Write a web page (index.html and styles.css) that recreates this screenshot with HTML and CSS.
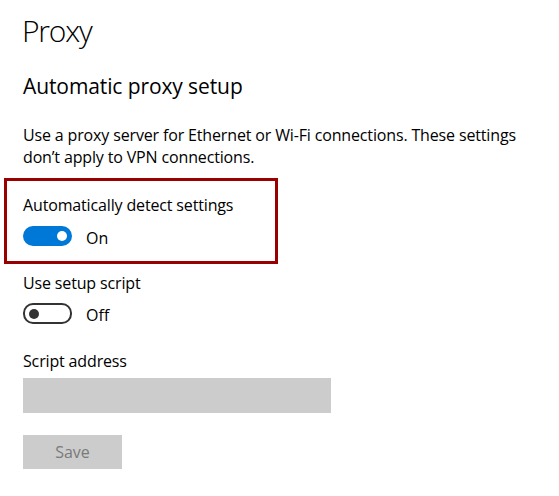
FILE: index.html
```html
<!DOCTYPE html>
<html lang="en">
<head>
<meta charset="utf-8">
<title>Proxy</title>
<link rel="stylesheet" href="styles.css">
</head>
<body>
<main class="page">
  <h1 class="title">Proxy</h1>
  <h2 class="section">Automatic proxy setup</h2>
  <p class="desc">Use a proxy server for Ethernet or Wi-Fi connections. These settings don’t apply to VPN connections.</p>

  <div class="highlight">
    <div class="label">Automatically detect settings</div>
    <div class="toggle-row">
      <span class="toggle on"><span class="knob"></span></span>
      <span class="state">On</span>
    </div>
  </div>

  <div class="setting">
    <div class="label">Use setup script</div>
    <div class="toggle-row off-row">
      <span class="toggle off"><span class="knob"></span></span>
      <span class="state">Off</span>
    </div>
  </div>

  <div class="field">
    <div class="label">Script address</div>
    <div class="input"></div>
  </div>

  <button class="save" type="button">Save</button>
</main>
</body>
</html>
```

FILE: styles.css
```css
html, body {
  margin: 0;
  padding: 0;
  background: #ffffff;
}

body {
  font-family: "Open Sans", "Noto Sans", "Liberation Sans", sans-serif;
  color: #000000;
}

.page {
  padding: 11px 0 0 23px;
  display: flex;
  flex-direction: column;
  align-items: flex-start;
}

.title {
  margin: 0 0 0 -1px;
  font-size: 30px;
  line-height: 40px;
  font-weight: 300;
  letter-spacing: -1.2px;
}

.section {
  margin: 21px 0 0 0;
  font-size: 21px;
  line-height: 28px;
  font-weight: 400;
  letter-spacing: -0.1px;
}

.desc {
  margin: 24px 0 0 0;
  font-size: 16px;
  line-height: 22px;
  width: 500px;
  letter-spacing: -0.15px;
}

.label {
  font-size: 16px;
  line-height: 22px;
  letter-spacing: -0.15px;
}

.highlight {
  margin: 10px 0 0 -19px;
  box-sizing: border-box;
  width: 274px;
  height: 86px;
  border: 3px solid #9b0000;
  padding: 13px 0 0 16px;
}

.toggle-row {
  display: flex;
  align-items: center;
  margin-top: 10px;
  height: 20px;
}

.toggle {
  box-sizing: border-box;
  width: 49px;
  height: 20px;
  border-radius: 10px;
  display: flex;
  align-items: center;
  padding: 0 5px;
}

.toggle .knob {
  width: 10px;
  height: 10px;
  border-radius: 50%;
}

.toggle.on {
  background: #0078d7;
  justify-content: flex-end;
}

.toggle.on .knob {
  background: #ffffff;
}

.toggle.off {
  height: 21px;
  border: 2px solid #333333;
  background: #ffffff;
  padding: 0 4px;
}

.toggle.off .knob {
  background: #333333;
}

.state {
  margin-left: 14px;
  font-size: 16px;
  line-height: 20px;
  padding-top: 3px;
}

.setting {
  margin-top: 8px;
}

.off-row {
  margin-top: 9px;
  height: 21px;
}

.field {
  margin-top: 26px;
}

.input {
  margin-top: 6px;
  width: 308px;
  height: 35px;
  background: #cccccc;
}

.save {
  margin-top: 22px;
  width: 99px;
  height: 34px;
  border: none;
  background: #cccccc;
  color: #7a7a7a;
  font-family: inherit;
  font-size: 16px;
  padding: 0;
}
```
